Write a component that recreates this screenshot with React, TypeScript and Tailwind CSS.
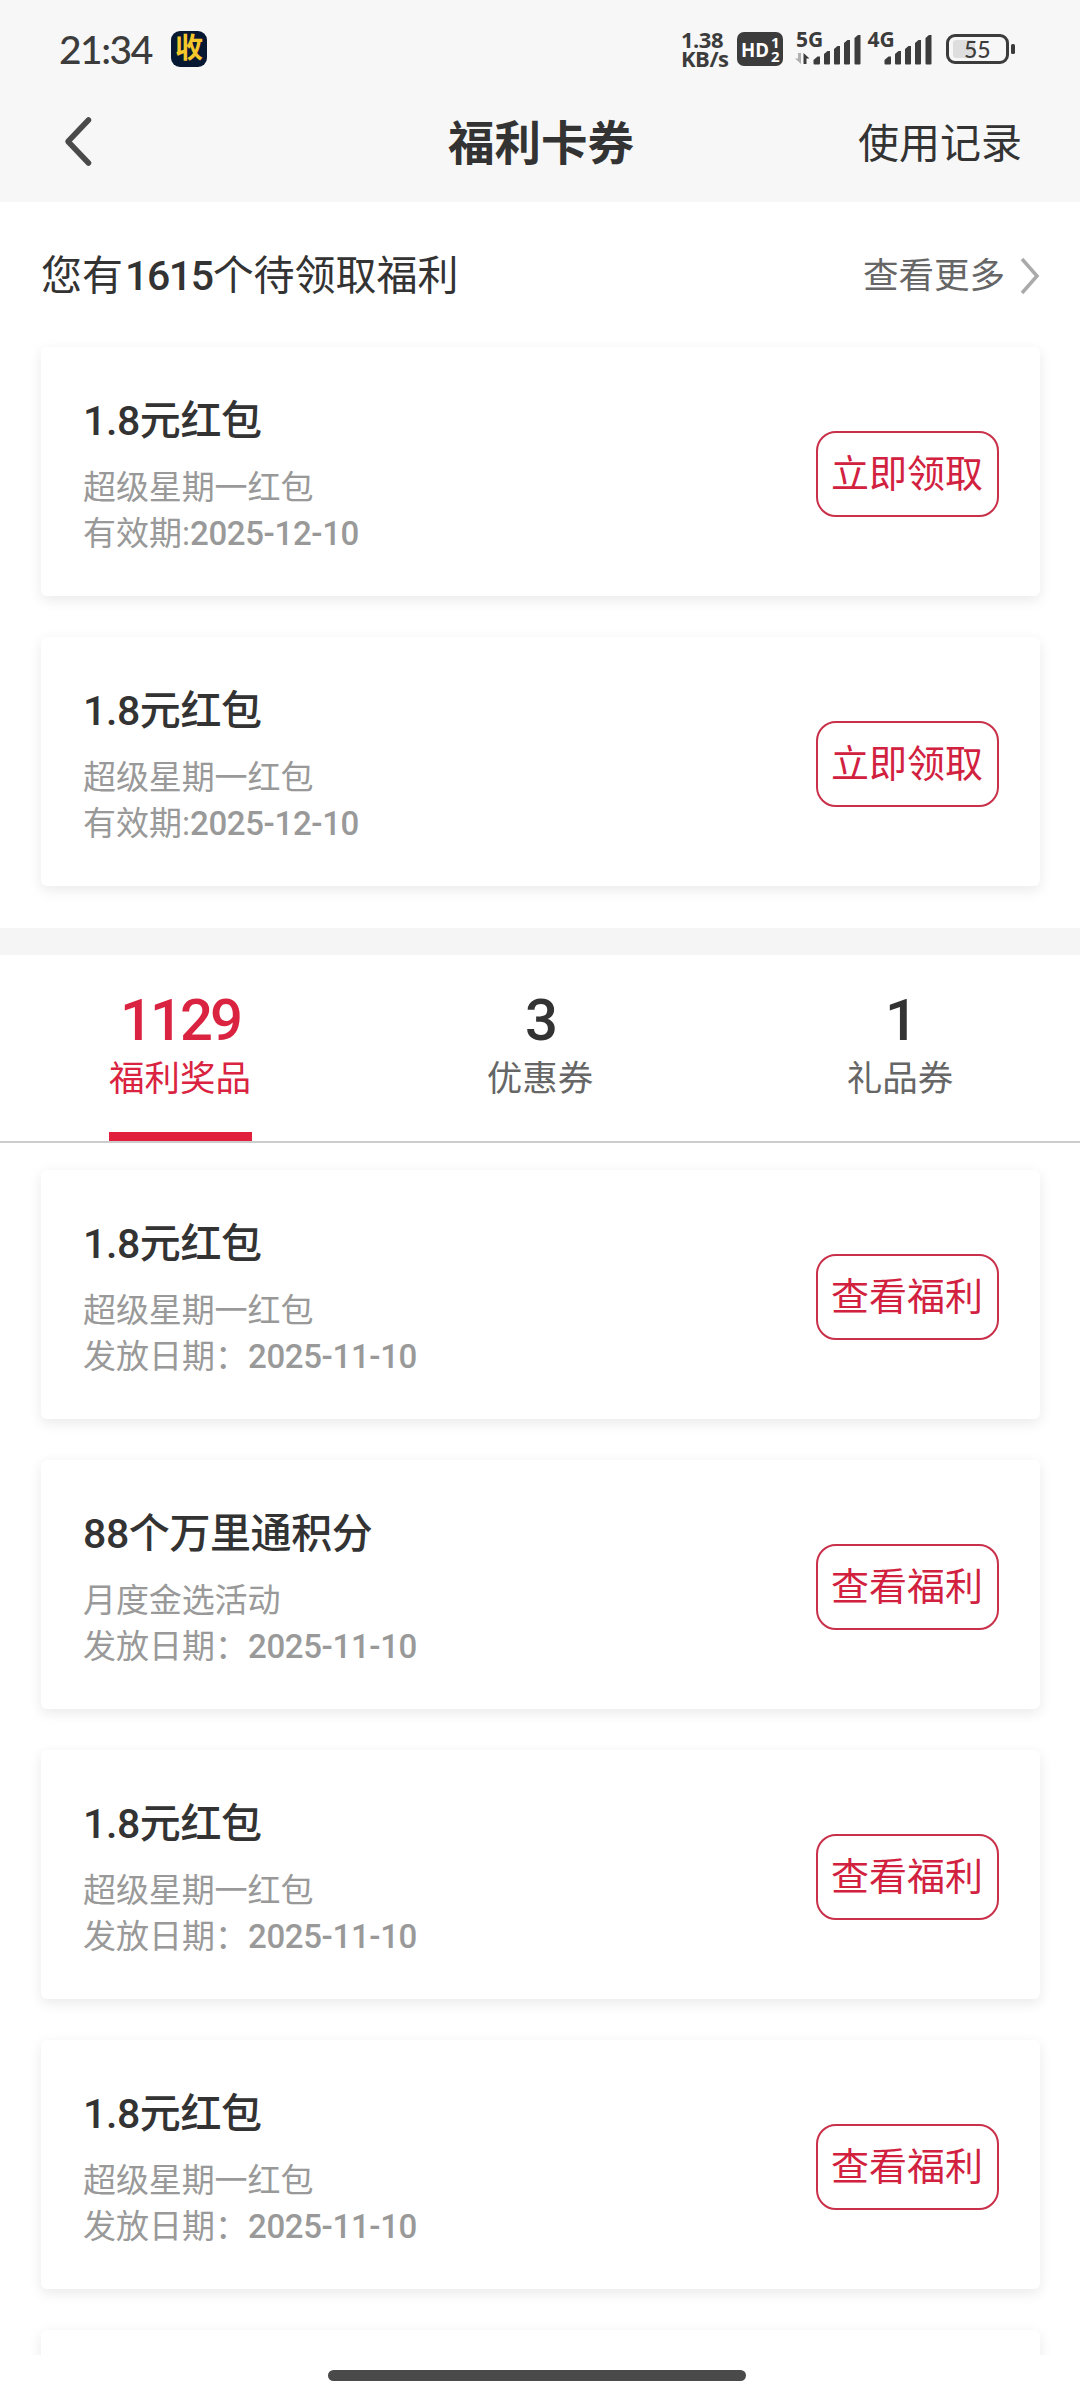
type Coupon = {
  title: string
  source: string
  dateLabel: string
  date: string
}

type Tab = {
  count: number
  label: string
}

const pending: Coupon[] = [
  { title: '1.8元红包', source: '超级星期一红包', dateLabel: '有效期:', date: '2025-12-10' },
  { title: '1.8元红包', source: '超级星期一红包', dateLabel: '有效期:', date: '2025-12-10' },
]

const tabs: Tab[] = [
  { count: 1129, label: '福利奖品' },
  { count: 3, label: '优惠券' },
  { count: 1, label: '礼品券' },
]

const received: Coupon[] = [
  { title: '1.8元红包', source: '超级星期一红包', dateLabel: '发放日期：', date: '2025-11-10' },
  { title: '88个万里通积分', source: '月度金选活动', dateLabel: '发放日期：', date: '2025-11-10' },
  { title: '1.8元红包', source: '超级星期一红包', dateLabel: '发放日期：', date: '2025-11-10' },
  { title: '1.8元红包', source: '超级星期一红包', dateLabel: '发放日期：', date: '2025-11-10' },
]

const SignalBars = () => (
  <g fill="#3c3c3c">
    <path d="M0 31.5V28l4-3.500h2.500v7a1 1 0 0 1-1 1H1a1 1 0 0 1-1-1z" />
    <path d="M10.500 22l3.500-3h2.500v12.500a1 1 0 0 1-1 1h-4a1 1 0 0 1-1-1z" />
    <path d="M20.500 17l3.500-3h2.500v17.500a1 1 0 0 1-1 1h-4a1 1 0 0 1-1-1z" />
    <path d="M30.500 11l3.500-3h2.500v23.500a1 1 0 0 1-1 1h-4a1 1 0 0 1-1-1z" />
    <path d="M41 6l3.500-3h2.500v28.500a1 1 0 0 1-1 1h-4a1 1 0 0 1-1-1z" />
  </g>
)

const StatusBar = () => (
  <div className="flex h-[98px] items-center pl-[59px] pr-[64px] text-[#3c3c3c]">
    <span className="w-[112px] font-['Lato'] text-[39px] font-medium leading-none tracking-[-1.5px]">21:34</span>
    <span className="flex h-9 w-9 items-center justify-center rounded-[9px] bg-[#071833] pb-[1px] text-[28px] font-bold leading-none text-[#f5c72b]">收</span>
    <div className="ml-auto flex items-center font-['Open_Sans'] font-bold">
      <div className="flex w-[56px] flex-col text-[22px] leading-[19px] tracking-[-0.5px]">
        <span>1.38</span>
        <span>KB/s</span>
      </div>
      <svg width="46" height="34" viewBox="0 0 46 34">
        <rect width="46" height="34" rx="7" fill="#3c3c3c" />
        <text x="4" y="24.500" fontSize="20" fill="#fff" textLength="28" lengthAdjust="spacingAndGlyphs">HD</text>
        <text x="34" y="15.500" fontSize="15" fill="#fff">1</text>
        <text x="34" y="30" fontSize="15" fill="#fff">2</text>
      </svg>
      <svg className="ml-3 overflow-visible" width="67" height="34" viewBox="0 0 67 34">
        <text x="1" y="15" fontSize="21" fill="#3c3c3c">5G</text>
        <path d="M6 21v11L0 26.500h3V21z" fill="#b0b0b0" />
        <path d="M8.500 32V21l6 5.500h-3V32z" fill="#3c3c3c" />
        <g transform="translate(18.500 0)"><SignalBars /></g>
      </svg>
      <svg className="ml-[5px] overflow-visible" width="67" height="34" viewBox="0 0 67 34">
        <text x="0.500" y="15" fontSize="21" fill="#3c3c3c">4G</text>
        <g transform="translate(17.500 0)"><SignalBars /></g>
      </svg>
      <svg className="ml-3" width="70" height="34" viewBox="0 0 70 34">
        <rect x="1.500" y="3.500" width="60" height="27" rx="7.500" fill="none" stroke="#3c3c3c" strokeWidth="3" />
        <rect x="7" y="8" width="22" height="18" rx="3" fill="#dedede" />
        <rect x="65" y="12" width="4" height="10" rx="1.500" fill="#3c3c3c" />
        <text x="18" y="25.500" fontFamily="Lato" fontWeight="500" fontSize="23" fill="#3c3c3c">55</text>
      </svg>
    </div>
  </div>
)

const NavBar = () => (
  <div className="flex h-[104px] items-center justify-between pl-[62px] pr-[58px] text-[#333]">
    <svg className="-mt-[18px] w-[162px]" height="54" viewBox="0 0 162 54">
      <path d="M26.500 6L6 27.500L26.500 49" fill="none" stroke="#4a4a4a" strokeWidth="5.500" strokeLinecap="round" strokeLinejoin="round" />
    </svg>
    <h1 className="-mt-[12px] text-[46.500px] font-bold leading-none">福利卡券</h1>
    <button className="-mt-[12px] w-[164px] text-right text-[41px] leading-none">使用记录</button>
  </div>
)

const CouponCard = ({ coupon, action }: { coupon: Coupon; action: string }) => (
  <div className="flex h-[249px] shrink-0 items-start justify-between rounded-[6px] bg-white pl-[42px] pr-[41px] shadow-[0_4px_14px_rgba(0,0,0,0.09)]">
    <div className="flex flex-col pt-[46px]">
      <h3 className="mb-[16px] text-[41px] font-medium leading-[56px] tracking-[-0.4px] text-[#333]">{coupon.title}</h3>
      <p className="text-[33px] leading-[46px] tracking-[-0.1px] text-[#999]">{coupon.source}</p>
      <p className="text-[33px] leading-[46px] text-[#999]">
        {coupon.dateLabel}<span className="font-medium tracking-[-0.35px]">{coupon.date}</span>
      </p>
    </div>
    <button className="mt-[84px] flex h-[86px] w-[183px] items-center justify-center rounded-[20px] border-2 border-[#c9304a] pr-[1px] text-[38px] leading-none text-[#d1213f]">{action}</button>
  </div>
)

const App = () => {
  return (
    <div className="flex h-[2400px] w-[1080px] flex-col overflow-hidden bg-white font-['Roboto','Noto_Sans_CJK_SC',sans-serif]">
      <header className="h-[202px] shrink-0 bg-[#f7f7f7]">
        <StatusBar />
        <NavBar />
      </header>

      <section className="shrink-0 pl-[41px] pr-[40px]">
        <div className="flex h-[145px] items-center justify-between pt-[4px]">
          <h2 className="text-[41px] leading-none text-[#333]">
            您有<span className="ml-[2px] font-medium tracking-[-1.4px]">1615</span>个待领取福利
          </h2>
          <a className="flex items-center gap-[15px] text-[35.500px] leading-none text-[#666]">
            查看更多
            <svg className="-mt-[2px]" width="20" height="38" viewBox="0 0 20 38">
              <path d="M2 2L17 19L2 36" fill="none" stroke="#aaa" strokeWidth="3.500" />
            </svg>
          </a>
        </div>
        <div className="flex flex-col gap-[41px] pb-[42px]">
          {pending.map((coupon, i) => <CouponCard coupon={coupon} action="立即领取" key={i} />)}
        </div>
      </section>

      <div className="h-[27px] shrink-0 bg-[#f5f5f5]" />

      <nav className="flex h-[188px] shrink-0 border-b-2 border-[#ccc]">
        {tabs.map((tab, i) => (
          <div key={tab.label} className={`flex flex-1 flex-col items-center ${i === 0 ? 'text-[#d92340]' : 'text-[#666]'}`}>
            <span className={`mt-[36px] text-[58px] font-medium leading-[58px] tracking-[-3px] ${i === 0 ? '' : 'text-[#333]'}`}>{tab.count}</span>
            <span className="mt-[10px] text-[35.500px] leading-[40px]">{tab.label}</span>
            {i === 0 && <span className="mt-auto h-[9px] w-[143px] bg-[#e0203c]" />}
          </div>
        ))}
      </nav>

      <section className="flex h-[1212px] shrink-0 flex-col gap-[41px] overflow-hidden pl-[41px] pr-[40px] pt-[27px]">
        {received.map((coupon, i) => <CouponCard coupon={coupon} action="查看福利" key={i} />)}
        {/* next card, cut off by the bottom of the list */}
        <div className="h-[249px] shrink-0 rounded-[6px] bg-white shadow-[0_4px_14px_rgba(0,0,0,0.09)]" />
      </section>

      <div className="flex flex-1 justify-center pr-[6px] pt-[15px]">
        <div className="h-[11px] w-[418px] rounded-full bg-[#4a4a4a]" />
      </div>
    </div>
  )
}

export default App
